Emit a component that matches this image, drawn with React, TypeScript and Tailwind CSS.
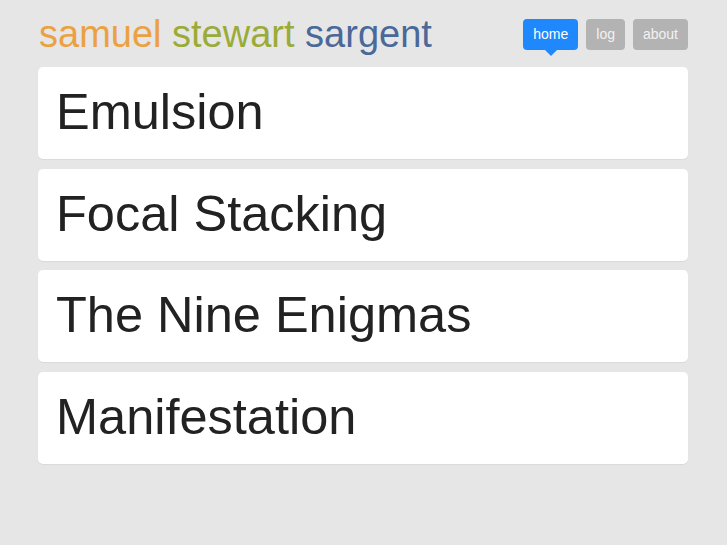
const posts = ["Emulsion", "Focal Stacking", "The Nine Enigmas", "Manifestation"];

const links = [
  { label: "home", active: true },
  { label: "log", active: false },
  { label: "about", active: false },
];

function Nav() {
  return (
    <nav className="flex gap-2 pt-[7px]">
      {links.map((l) => (
        <a
          key={l.label}
          href="#"
          className={
            l.active
              ? "relative h-[31px] px-[10px] rounded-[4px] bg-[#1e88fc] text-white text-[14px] leading-[31px]"
              : "relative h-[31px] px-[10px] rounded-[4px] bg-[#b3b3b3] text-[#f2f2f2] text-[14px] leading-[31px]"
          }
        >
          {l.label}
          {l.active && (
            <span className="absolute left-1/2 -translate-x-1/2 top-full w-0 h-0 border-l-[6px] border-r-[6px] border-t-[6px] border-l-transparent border-r-transparent border-t-[#1e88fc]" />
          )}
        </a>
      ))}
    </nav>
  );
}

export default function App() {
  return (
    <div className="min-h-screen bg-[#e6e6e6] font-['Liberation_Sans',Arial,sans-serif]">
      <div className="w-[650px] ml-[38px]">
        <header className="flex justify-between items-start pt-[12px] h-[67px]">
          <h1 className="text-[38px] leading-[44px] pl-[1px]">
            <span className="text-[#eba142]">samuel</span>{" "}
            <span className="text-[#9aab36]">stewart</span>{" "}
            <span className="text-[#4a6898]">sargent</span>
          </h1>
          <Nav />
        </header>
        <main className="flex flex-col gap-[9.7px]">
          {posts.map((p) => (
            <a
              key={p}
              href="#"
              className="block h-[92px] bg-white rounded-[5px] shadow-[0_1px_1px_rgba(0,0,0,0.06)] px-[18px] pt-[16px] text-[50.5px] leading-[57px] text-[#222222]"
            >
              {p}
            </a>
          ))}
        </main>
      </div>
    </div>
  );
}
